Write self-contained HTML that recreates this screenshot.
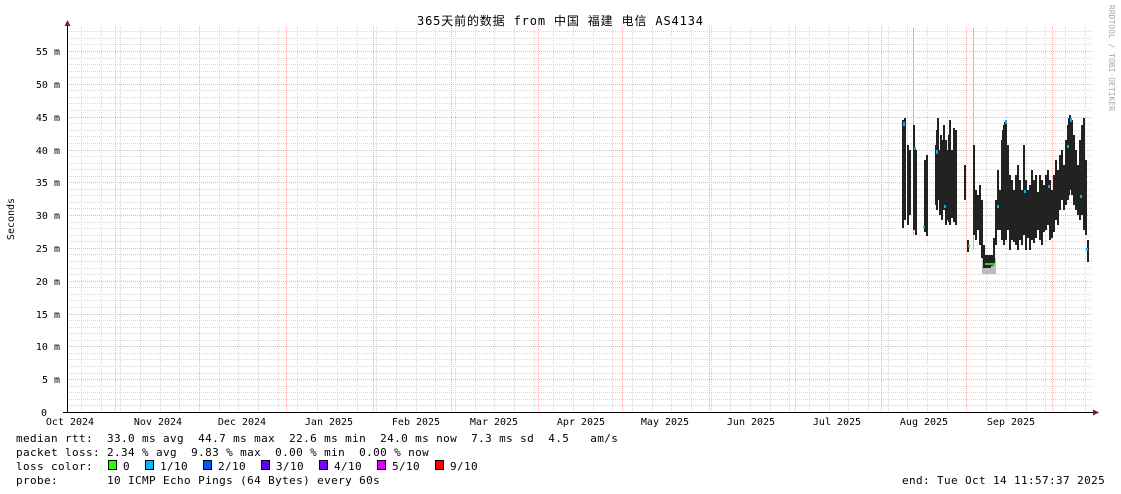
<!DOCTYPE html>
<html><head><meta charset="utf-8"><style>
html,body{margin:0;padding:0;background:#fff;width:1121px;height:494px;overflow:hidden}
svg text{font-family:"DejaVu Sans Mono","Liberation Mono","Noto Sans CJK SC",monospace;font-size:10px;fill:#000}
svg text.lg{font-size:11px;letter-spacing:0.38px}
</style></head><body>
<svg width="1121" height="494" xmlns="http://www.w3.org/2000/svg">
<g stroke="#d8d8d8" stroke-width="1" stroke-dasharray="1,1" shape-rendering="crispEdges">
<path d="M67 405.5H1093M67 399.5H1093M67 392.5H1093M67 386.5H1093M67 373.5H1093M67 366.5H1093M67 359.5H1093M67 353.5H1093
M67 340.5H1093M67 333.5H1093M67 327.5H1093M67 320.5H1093M67 307.5H1093M67 300.5H1093M67 294.5H1093M67 287.5H1093
M67 274.5H1093M67 268.5H1093M67 261.5H1093M67 254.5H1093M67 241.5H1093M67 235.5H1093M67 228.5H1093M67 222.5H1093
M67 208.5H1093M67 202.5H1093M67 195.5H1093M67 189.5H1093M67 176.5H1093M67 169.5H1093M67 163.5H1093M67 156.5H1093
M67 143.5H1093M67 136.5H1093M67 130.5H1093M67 123.5H1093M67 110.5H1093M67 103.5H1093M67 97.5H1093M67 90.5H1093
M67 77.5H1093M67 71.5H1093M67 64.5H1093M67 58.5H1093M67 44.5H1093M67 38.5H1093M67 31.5H1093"/>
<path d="M81.5 26V412M101.5 26V412M120.5 26V412M140.5 26V412M160.5 26V412M179.5 26V412M219.5 26V412M238.5 26V412M258.5 26V412M278.5 26V412
M297.5 26V412M317.5 26V412M337.5 26V412M357.5 26V412M376.5 26V412M396.5 26V412M416.5 26V412M435.5 26V412M455.5 26V412M475.5 26V412
M494.5 26V412M514.5 26V412M534.5 26V412M553.5 26V412M573.5 26V412M593.5 26V412M612.5 26V412M632.5 26V412M652.5 26V412M671.5 26V412
M691.5 26V412M711.5 26V412M730.5 26V412M750.5 26V412M770.5 26V412M789.5 26V412M809.5 26V412M829.5 26V412M848.5 26V412M868.5 26V412
M888.5 26V412M907.5 26V412M927.5 26V412M947.5 26V412M986.5 26V412M1006.5 26V412M1026.5 26V412M1045.5 26V412M1065.5 26V412M1085.5 26V412"/>
</g>
<g stroke="#f4b0b0" stroke-width="1" stroke-dasharray="1,1" shape-rendering="crispEdges">
<path d="M67 51.5H1093M67 84.5H1093M67 117.5H1093M67 150.5H1093M67 182.5H1093M67 215.5H1093M67 248.5H1093M67 281.5H1093M67 314.5H1093M67 346.5H1093M67 379.5H1093"/>
<path d="M115.5 26V412M199.5 26V412M286.5 26V412M373.5 26V412M451.5 26V412M538.5 26V412M622.5 26V412M709.5 26V412M795.5 26V412M881.5 26V412M966.5 26V412M1052.5 26V412"/>
</g>
<g stroke="#bbb" stroke-width="1">
<line x1="913.5" y1="28" x2="913.5" y2="236"/><line x1="973.5" y1="28" x2="973.5" y2="250"/>
</g>
<rect x="982" y="258" width="14" height="16" fill="#bbb"/>
<g stroke="#222" stroke-width="2" fill="none" shape-rendering="crispEdges" transform="translate(-0.5,0)">
<path d="M903.5 120V228M905.5 118V220M908.5 145V225M910.5 150V215M914.5 125V230M916.5 150V235M925.5 160V232M927.5 155V236
M936.5 145V205M937.5 130V210M938.5 118V200M940.5 150V215M941.5 135V212M942.5 140V220M944.5 125V210M946.5 140V225M948.5 150V220M949.5 135V222M950.5 120V225M952.5 150V218M954.5 128V222M956.5 130V225
M965.5 165V200M968.5 240V252
M974.5 145V235M976.5 190V240M978.5 195V230M980.5 185V245M982.5 200V258M984.5 245V268M986.5 255V268M988.5 255V268M990.5 255V268M992.5 255V266M994.5 238V265M996.5 200V245
M998.5 170V230M1000.5 190V230M1002.5 140V240M1003.5 130V238M1004.5 125V245M1005.5 122V240M1006.5 120V240M1008.5 145V230
M1010.5 175V250M1012.5 180V240M1014.5 190V242M1016.5 175V245M1018.5 165V250M1020.5 180V240M1022.5 190V245M1024.5 145V235M1026.5 180V250M1028.5 190V238
M1030.5 185V250M1032.5 170V240M1034.5 180V243M1036.5 175V238M1038.5 192V230M1040.5 175V240M1042.5 180V245M1044.5 185V232
M1046.5 175V230M1048.5 170V225M1050.5 180V240M1052.5 190V238M1054.5 175V232M1056.5 160V220M1058.5 170V225
M1060.5 155V210M1062.5 150V200M1064.5 165V210M1066.5 140V205M1068.5 125V200M1069.5 118V195M1070.5 115V190M1072.5 120V195M1074.5 135V205M1076.5 150V210M1078.5 165V215
M1080.5 140V220M1082.5 125V215M1084.5 118V230M1086.5 160V235M1088.5 240V262"/>
</g>
<g fill="#00b0ff">
<rect x="903" y="122" width="2" height="4"/><rect x="914" y="147" width="2" height="3"/><rect x="936" y="150" width="2" height="4"/>
<rect x="944" y="205" width="2" height="3"/><rect x="1005" y="120" width="2" height="4"/><rect x="1070" y="118" width="2" height="4"/>
<rect x="1067" y="145" width="2" height="3"/><rect x="997" y="205" width="2" height="3"/><rect x="1080" y="195" width="2" height="3"/>
<rect x="1024" y="190" width="2" height="3"/><rect x="1048" y="185" width="2" height="3"/><rect x="1086" y="248" width="2" height="3"/>
</g>
<g fill="#22dd22">
<rect x="985" y="263" width="10" height="2"/><rect x="923" y="226" width="2" height="2"/><rect x="968" y="245" width="2" height="2"/>
</g>
<line x1="67.5" y1="24" x2="67.5" y2="413" stroke="#000"/>
<line x1="63" y1="412.5" x2="1095" y2="412.5" stroke="#000"/>
<path d="M64.5 26L67.5 20L70.5 26Z" fill="#8b1a1a"/>
<path d="M1093 409.5L1099 412.5L1093 415.5Z" fill="#8b1a1a"/>
<g text-anchor="end">
<text x="60" y="55">55 m</text><text x="60" y="88">50 m</text><text x="60" y="121">45 m</text>
<text x="60" y="154">40 m</text><text x="60" y="186">35 m</text><text x="60" y="219">30 m</text>
<text x="60" y="252">25 m</text><text x="60" y="285">20 m</text><text x="60" y="318">15 m</text>
<text x="60" y="350">10 m</text><text x="60" y="383">5 m</text><text x="47" y="416">0</text>
</g>
<g text-anchor="middle">
<text x="70" y="425">Oct 2024</text><text x="158" y="425">Nov 2024</text><text x="242" y="425">Dec 2024</text>
<text x="329" y="425">Jan 2025</text><text x="416" y="425">Feb 2025</text><text x="494" y="425">Mar 2025</text>
<text x="581" y="425">Apr 2025</text><text x="665" y="425">May 2025</text><text x="751" y="425">Jun 2025</text>
<text x="837" y="425">Jul 2025</text><text x="924" y="425">Aug 2025</text><text x="1011" y="425">Sep 2025</text>
</g>
<text x="417" y="25" style="font-size:12px" textLength="286" lengthAdjust="spacing">365天前的数据 from 中国 福建 电信 AS4134</text>
<text transform="translate(14,219) rotate(-90)" text-anchor="middle">Seconds</text>
<text transform="translate(1109,5) rotate(90)" style="font-size:8px;fill:#aaa">RRDTOOL / TOBI OETIKER</text>
<text class="lg" x="16" y="442" xml:space="preserve">median rtt:  33.0 ms avg  44.7 ms max  22.6 ms min  24.0 ms now  7.3 ms sd  4.5   am/s</text>
<text class="lg" x="16" y="456" xml:space="preserve">packet loss: 2.34 % avg  9.83 % max  0.00 % min  0.00 % now</text>
<text class="lg" x="16" y="470" xml:space="preserve">loss color:</text>
<text class="lg" x="16" y="484" xml:space="preserve">probe:       10 ICMP Echo Pings (64 Bytes) every 60s</text>
<text class="lg" x="902" y="484" xml:space="preserve">end: Tue Oct 14 11:57:37 2025</text>
<g stroke="#000" stroke-width="1">
<rect x="108.5" y="460.5" width="8" height="9" fill="#26ff00"/>
<rect x="145.5" y="460.5" width="8" height="9" fill="#00b8ff"/>
<rect x="203.5" y="460.5" width="8" height="9" fill="#0059ff"/>
<rect x="261.5" y="460.5" width="8" height="9" fill="#5e00ff"/>
<rect x="319.5" y="460.5" width="8" height="9" fill="#7e00ff"/>
<rect x="377.5" y="460.5" width="8" height="9" fill="#dd00ff"/>
<rect x="435.5" y="460.5" width="8" height="9" fill="#ff0000"/>
</g>
<text class="lg" x="123" y="470">0</text><text class="lg" x="160" y="470">1/10</text><text class="lg" x="218" y="470">2/10</text>
<text class="lg" x="276" y="470">3/10</text><text class="lg" x="334" y="470">4/10</text><text class="lg" x="392" y="470">5/10</text><text class="lg" x="450" y="470">9/10</text>
</svg>
</body></html>
